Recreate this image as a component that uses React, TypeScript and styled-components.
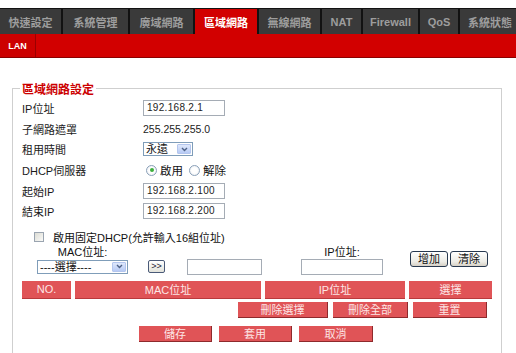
import React from "react";
import styled, { createGlobalStyle } from "styled-components";

const GlobalStyle = createGlobalStyle`
  html, body {
    margin: 0;
    padding: 0;
    background: #ffffff;
    font-family: "Liberation Sans", "Noto Sans CJK TC", sans-serif;
    font-size: 11px;
    color: #111;
    overflow: hidden;
  }
`;

const Page = styled.div`
  width: 516px;
  height: 353px;
  padding-top: 8px;
  box-sizing: border-box;
  overflow: hidden;
`;

const TabBar = styled.div`
  display: flex;
  height: 26px;
  background: #121212;
  padding-top: 1px;
  box-sizing: border-box;
  gap: 2px;
  overflow: hidden;
`;

const Tab = styled.div<{ $active?: boolean; $w: number }>`
  flex: 0 0 ${(p) => p.$w}px;
  display: flex;
  align-items: center;
  justify-content: center;
  background: ${(p) => (p.$active ? "#d20000" : "#3a3a3a")};
  color: ${(p) => (p.$active ? "#ffffff" : "#9d9d9d")};
  font-weight: bold;
  font-size: 11px;
  white-space: nowrap;
`;

const SubBar = styled.div`
  display: flex;
  height: 24px;
  background: #d20000;
  border-bottom: 1px solid #8a0000;
  box-sizing: border-box;
`;

const SubTab = styled.div`
  width: 35px;
  display: flex;
  align-items: center;
  justify-content: center;
  color: #ffffff;
  font-weight: bold;
  font-size: 9px;
  background: #cc0000;
  border-right: 1px solid #9a0000;
`;

const Fieldset = styled.fieldset`
  margin: 22px 14px 0 12px;
  padding: 1px 0 0 9px;
  border: 1px solid #cfcfcf;
  min-height: 300px;
`;

const Legend = styled.legend`
  color: #cc0000;
  font-weight: bold;
  font-size: 12px;
  padding: 0 2px;
  margin-left: -2px;
`;

const FormGrid = styled.div`
  display: grid;
  grid-template-columns: 121px 1fr;
  grid-auto-rows: 20.6px;
  align-items: center;
`;

const Label = styled.div`
  font-size: 11px;
  color: #1a1a1a;
`;

const TextInput = styled.div<{ $w: number }>`
  width: ${(p) => p.$w}px;
  height: 16px;
  border: 1px solid #a5acb5;
  background: #fff;
  box-sizing: border-box;
  padding-left: 3px;
  font-size: 10px;
  line-height: 14px;
  color: #222;
  letter-spacing: 0.3px;
`;

const Plain = styled.div`
  font-size: 10.5px;
  color: #222;
`;

const SelectBox = styled.div<{ $w: number }>`
  width: ${(p) => p.$w}px;
  height: 14px;
  border: 1px solid #7f9db9;
  background: #fff;
  box-sizing: border-box;
  display: flex;
  align-items: center;
  justify-content: space-between;
  padding: 0 1px 0 2px;
  font-size: 11px;
  line-height: 12px;
  color: #111;
  white-space: nowrap;
`;

const ArrowBox = styled.span`
  width: 14px;
  height: 10px;
  background: linear-gradient(#dfe8fb, #b7caf5);
  border: 1px solid #b4c6ee;
  box-sizing: border-box;
  display: flex;
  align-items: center;
  justify-content: center;
  border-radius: 1px;
`;

const RadioGroup = styled.div`
  display: flex;
  align-items: center;
  gap: 3px;
  font-size: 11.5px;
`;

const RadioCircle = styled.span<{ $on?: boolean }>`
  width: 11px;
  height: 11px;
  border-radius: 50%;
  border: 1px solid #8aa0b8;
  background: radial-gradient(circle, #fff 40%, #e4e8ee 100%);
  box-sizing: border-box;
  display: inline-flex;
  align-items: center;
  justify-content: center;
  margin-left: 3px;
  &::after {
    content: "";
    width: 4px;
    height: 4px;
    border-radius: 50%;
    background: ${(p) => (p.$on ? "#3cae3c" : "transparent")};
  }
`;

const CheckRow = styled.label`
  display: flex;
  align-items: center;
  gap: 9px;
  margin: 8px 0 0 12px;
  height: 14px;
  font-size: 11px;
`;

const CheckBox = styled.span`
  width: 10px;
  height: 10px;
  border: 1px solid #9aa4b0;
  background: linear-gradient(135deg, #dcdcd4, #fafaf8);
  box-sizing: border-box;
`;

const MacGrid = styled.div`
  display: grid;
  grid-template-columns: 111px 39px 114px 109px auto;
  grid-template-rows: 13px 16px;
  align-items: center;
  margin: 2px 0 0 15px;
`;

const CenterLabel = styled.div<{ $w: number; $col: number }>`
  grid-row: 1;
  grid-column: ${(p) => p.$col};
  width: ${(p) => p.$w}px;
  text-align: center;
  font-size: 11px;
  line-height: 12px;
`;

const Cell = styled.div<{ $col: number }>`
  grid-row: 2;
  grid-column: ${(p) => p.$col};
`;

const SmallBtn = styled.div`
  width: 17px;
  height: 13px;
  border: 1px solid #4a5a78;
  border-radius: 2px;
  background: linear-gradient(#ffffff, #e2e2da);
  box-sizing: border-box;
  font-size: 9px;
  line-height: 11px;
  text-align: center;
  color: #223;
`;

const BtnGroup = styled.div`
  grid-row: 1 / span 2;
  grid-column: 5;
  display: flex;
  gap: 2px;
  align-self: center;
  margin-top: -2px;
`;

const XpButton = styled.div`
  width: 38px;
  height: 16px;
  border: 1px solid #27384f;
  border-radius: 3px;
  background: linear-gradient(#ffffff, #ecebe5 70%, #d6d0c5);
  box-sizing: border-box;
  font-size: 11px;
  line-height: 14px;
  text-align: center;
  color: #111;
`;

const HeaderRow = styled.div`
  display: grid;
  grid-template-columns: 49px 186px 140px 83px;
  column-gap: 4px;
  margin-top: 6px;
`;

const RedCell = styled.div`
  height: 18px;
  background: #e05457;
  color: #fde6e6;
  font-size: 11px;
  display: flex;
  align-items: center;
  justify-content: center;
  border-bottom: 1px solid #b9393c;
  box-sizing: border-box;
`;

const ActionRow = styled.div<{ $pl: number }>`
  display: flex;
  gap: 5px;
  padding-left: ${(p) => p.$pl}px;
  margin-top: 3px;
`;

const RedButton = styled.div<{ $w: number }>`
  width: ${(p) => p.$w}px;
  height: 16px;
  background: #e05457;
  color: #fde6e6;
  font-size: 11px;
  display: flex;
  align-items: center;
  justify-content: center;
  border-right: 1px solid #8e2a2c;
  border-bottom: 1px solid #8e2a2c;
  box-sizing: border-box;
`;

const SubmitRow = styled.div`
  display: flex;
  gap: 7px;
  padding-left: 117px;
  margin-top: 8px;
`;

const Chevron = () => (
  <svg width="7" height="5" viewBox="0 0 7 5">
    <path d="M1 1 L3.5 3.5 L6 1" fill="none" stroke="#4d6185" strokeWidth="1.4" />
  </svg>
);

const tabs: { name: string; w: number; active?: boolean }[] = [
  { name: "快速設定", w: 61 },
  { name: "系統管理", w: 65 },
  { name: "廣域網路", w: 63 },
  { name: "區域網路", w: 62, active: true },
  { name: "無線網路", w: 61 },
  { name: "NAT", w: 39 },
  { name: "Firewall", w: 55 },
  { name: "QoS", w: 38 },
  { name: "系統狀態", w: 60 },
];

const App = () => {
  return (
    <>
      <GlobalStyle />
      <Page>
        <TabBar>
          {tabs.map((t) => (
            <Tab key={t.name} $w={t.w} $active={t.active}>
              {t.name}
            </Tab>
          ))}
        </TabBar>
        <SubBar>
          <SubTab>LAN</SubTab>
        </SubBar>
        <Fieldset>
          <Legend>區域網路設定</Legend>
          <FormGrid>
            <Label>IP位址</Label>
            <TextInput $w={82}>192.168.2.1</TextInput>
            <Label>子網路遮罩</Label>
            <Plain>255.255.255.0</Plain>
            <Label>租用時間</Label>
            <SelectBox $w={50}>
              永遠
              <ArrowBox>
                <Chevron />
              </ArrowBox>
            </SelectBox>
            <Label>DHCP伺服器</Label>
            <RadioGroup>
              <RadioCircle $on />
              啟用
              <RadioCircle />
              解除
            </RadioGroup>
            <Label>起始IP</Label>
            <TextInput $w={82}>192.168.2.100</TextInput>
            <Label>結束IP</Label>
            <TextInput $w={82}>192.168.2.200</TextInput>
          </FormGrid>
          <CheckRow>
            <CheckBox />
            啟用固定DHCP(允許輸入16組位址)
          </CheckRow>
          <MacGrid>
            <CenterLabel $w={91} $col={1}>MAC位址:</CenterLabel>
            <CenterLabel $w={82} $col={4}>IP位址:</CenterLabel>
            <BtnGroup>
              <XpButton>增加</XpButton>
              <XpButton>清除</XpButton>
            </BtnGroup>
            <Cell $col={1}>
              <SelectBox $w={91}>
                ----選擇----
                <ArrowBox>
                  <Chevron />
                </ArrowBox>
              </SelectBox>
            </Cell>
            <Cell $col={2}>
              <SmallBtn>&gt;&gt;</SmallBtn>
            </Cell>
            <Cell $col={3}>
              <TextInput $w={75} />
            </Cell>
            <Cell $col={4}>
              <TextInput $w={82} />
            </Cell>
          </MacGrid>
          <HeaderRow>
            <RedCell>NO.</RedCell>
            <RedCell>MAC位址</RedCell>
            <RedCell>IP位址</RedCell>
            <RedCell>選擇</RedCell>
          </HeaderRow>
          <ActionRow $pl={216}>
            <RedButton $w={90}>刪除選擇</RedButton>
            <RedButton $w={75}>刪除全部</RedButton>
            <RedButton $w={74}>重置</RedButton>
          </ActionRow>
          <SubmitRow>
            <RedButton $w={73}>儲存</RedButton>
            <RedButton $w={73}>套用</RedButton>
            <RedButton $w={74}>取消</RedButton>
          </SubmitRow>
        </Fieldset>
      </Page>
    </>
  );
};

export default App;
